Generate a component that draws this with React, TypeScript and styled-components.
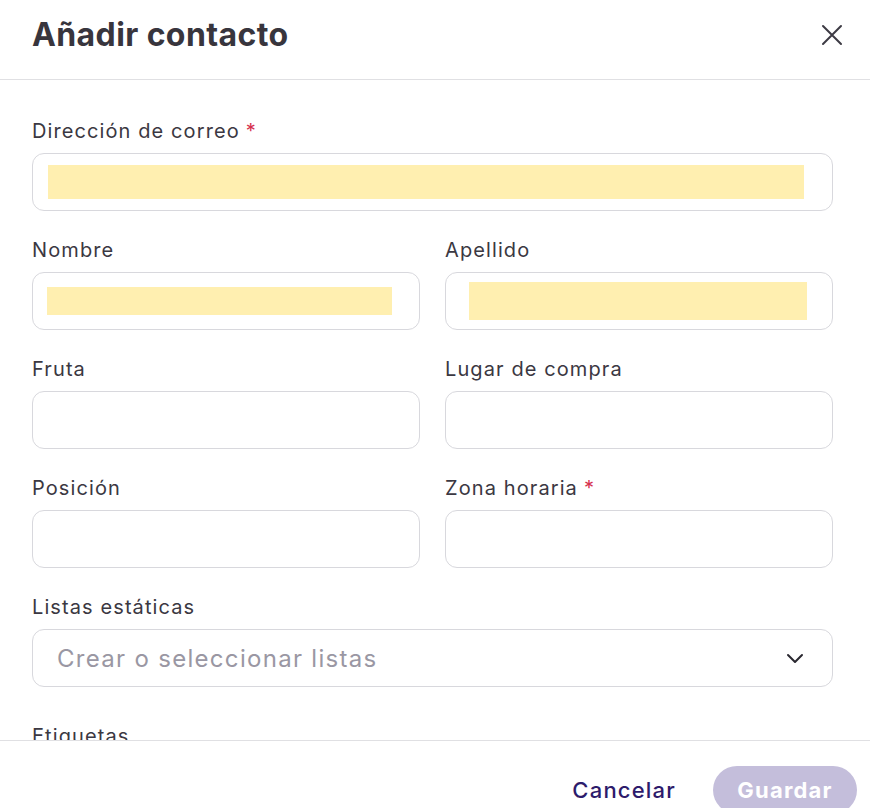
import React from "react";
import styled, { createGlobalStyle } from "styled-components";

const GlobalStyle = createGlobalStyle`
  html, body {
    margin: 0;
    padding: 0;
    background: #ffffff;
  }
  body {
    font-family: "Inter", "Noto Sans", sans-serif;
    color: #3b3842;
  }
  * {
    box-sizing: border-box;
  }
`;

const Modal = styled.div`
  width: 870px;
  height: 808px;
  display: flex;
  flex-direction: column;
  background: #ffffff;
  overflow: hidden;
`;

const Header = styled.div`
  height: 80px;
  flex-shrink: 0;
  display: flex;
  align-items: center;
  justify-content: space-between;
  padding: 0 20px 10px 32px;
  border-bottom: 1px solid #e0e0e3;
`;

const Title = styled.h2`
  margin: 0;
  font-size: 32px;
  font-weight: 700;
  color: #38353d;
  letter-spacing: 0.4px;
`;

const CloseButton = styled.button`
  width: 36px;
  height: 36px;
  border: none;
  background: none;
  padding: 0;
  display: flex;
  align-items: center;
  justify-content: center;
  cursor: pointer;
`;

const Body = styled.div`
  flex: 1;
  overflow: hidden;
  padding: 37px 37px 0 32px;
`;

const FieldGrid = styled.div`
  display: grid;
  grid-template-columns: 1fr 1fr;
  column-gap: 25px;
  row-gap: 25px;
`;

const Field = styled.div<{ $wide?: boolean; $extraTop?: number }>`
  grid-column: ${(p) => (p.$wide ? "1 / -1" : "auto")};
  margin-top: ${(p) => p.$extraTop ?? 0}px;
  display: flex;
  flex-direction: column;
  gap: 8px;
`;

const Label = styled.label`
  height: 28px;
  line-height: 28px;
  font-size: 20px;
  font-weight: 400;
  letter-spacing: 1.1px;
  color: #3b3842;
`;

const Required = styled.span`
  color: #d6304f;
  margin-left: 6px;
`;

const InputBox = styled.div<{ $pad?: number }>`
  height: 58px;
  border: 1px solid #d8d8dd;
  border-radius: 12px;
  display: flex;
  align-items: center;
  padding-left: ${(p) => p.$pad ?? 16}px;
  padding-right: 24px;
`;

const Highlight = styled.div<{ $w: string; $h: number }>`
  width: ${(p) => p.$w};
  height: ${(p) => p.$h}px;
  background: #ffefb0;
`;

const SelectBox = styled(InputBox)`
  justify-content: space-between;
  padding-right: 28px;
  cursor: pointer;
`;

const Placeholder = styled.span`
  font-size: 24px;
  letter-spacing: 1.3px;
  color: #9a97a3;
  padding-left: 8px;
`;

const Footer = styled.div`
  height: 68px;
  flex-shrink: 0;
  border-top: 1px solid #e0e0e3;
  display: flex;
  justify-content: flex-end;
  align-items: flex-start;
  gap: 37px;
  padding: 25px 13px 0 0;
`;

const TextButton = styled.button`
  border: none;
  background: none;
  padding: 0;
  height: 48px;
  font-family: inherit;
  font-size: 22px;
  font-weight: 500;
  letter-spacing: 1.2px;
  color: #2d1b6b;
  cursor: pointer;
`;

const PrimaryButton = styled.button`
  width: 144px;
  height: 48px;
  border: none;
  border-radius: 24px;
  background: #c4bedb;
  color: #ffffff;
  font-family: inherit;
  font-size: 22px;
  font-weight: 700;
  letter-spacing: 1.2px;
  cursor: default;
`;

const CloseIcon = () => (
  <svg width="22" height="22" viewBox="0 0 22 22" fill="none">
    <path d="M2 2L20 20M20 2L2 20" stroke="#3d3b44" strokeWidth="2" strokeLinecap="round" />
  </svg>
);

const ChevronIcon = () => (
  <svg width="18" height="12" viewBox="0 0 18 12" fill="none">
    <path d="M2 3L9 10L16 3" stroke="#2a2830" strokeWidth="2" strokeLinecap="round" strokeLinejoin="round" />
  </svg>
);

export default function App() {
  return (
    <>
      <GlobalStyle />
      <Modal>
        <Header>
          <Title>Añadir contacto</Title>
          <CloseButton aria-label="Cerrar">
            <CloseIcon />
          </CloseButton>
        </Header>
        <Body>
          <FieldGrid>
            <Field $wide>
              <Label>
                Dirección de correo<Required>*</Required>
              </Label>
              <InputBox $pad={15}>
                <Highlight $w="756px" $h={34} />
              </InputBox>
            </Field>
            <Field>
              <Label>Nombre</Label>
              <InputBox $pad={14}>
                <Highlight $w="345px" $h={28} />
              </InputBox>
            </Field>
            <Field>
              <Label>Apellido</Label>
              <InputBox $pad={23}>
                <Highlight $w="338px" $h={38} />
              </InputBox>
            </Field>
            <Field>
              <Label>Fruta</Label>
              <InputBox />
            </Field>
            <Field>
              <Label>Lugar de compra</Label>
              <InputBox />
            </Field>
            <Field>
              <Label>Posición</Label>
              <InputBox />
            </Field>
            <Field>
              <Label>
                Zona horaria<Required>*</Required>
              </Label>
              <InputBox />
            </Field>
            <Field $wide>
              <Label>Listas estáticas</Label>
              <SelectBox>
                <Placeholder>Crear o seleccionar listas</Placeholder>
                <ChevronIcon />
              </SelectBox>
            </Field>
            <Field $wide $extraTop={10}>
              <Label>Etiquetas</Label>
              <InputBox />
            </Field>
          </FieldGrid>
        </Body>
        <Footer>
          <TextButton>Cancelar</TextButton>
          <PrimaryButton>Guardar</PrimaryButton>
        </Footer>
      </Modal>
    </>
  );
}
